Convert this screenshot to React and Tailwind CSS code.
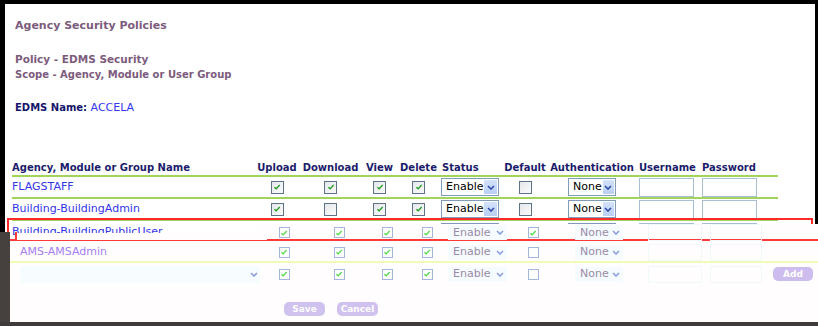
import React from "react";

const cols = "grid grid-cols-[243px_44px_63px_35px_43px_62px_46px_88px_63px_61px]";
const ocols = "grid grid-cols-[252px_44px_66px_30px_50px_58px_46px_84px_65px_60px_53px]";

function Chevron({ color = "#2f4aa8" }) {
  return (
    <svg viewBox="0 0 8 5" className="w-[8px] h-[5px]">
      <path d="M1 1 L4 4 L7 1" stroke={color} strokeWidth="1.6" fill="none" />
    </svg>
  );
}

function Check({ color }) {
  return (
    <svg viewBox="0 0 10 10" className="w-[8px] h-[8px]">
      <path d="M1.8 5.2 L4 7.3 L8.3 2.6" stroke={color} strokeWidth="1.7" fill="none" />
    </svg>
  );
}

function Box({ checked }) {
  return (
    <span className="inline-flex w-[13px] h-[13px] items-center justify-center border border-[#5f7286] bg-gradient-to-br from-[#e4e7eb] to-[#fbfbfb]">
      {checked && <Check color="#1f9a1f" />}
    </span>
  );
}

function FaintBox({ checked }) {
  return (
    <span className="inline-flex w-[11px] h-[11px] items-center justify-center border border-[#a3b7dc] bg-white">
      {checked && <Check color="#59d84f" />}
    </span>
  );
}

function Select({ value, width }) {
  return (
    <div className={`flex h-[18px] items-stretch border border-[#7f9db9] bg-white ${width}`}>
      <span className="flex-1 pl-[4px] leading-[16px] text-[11px] text-black">{value}</span>
      <span className="w-[16px] m-[1px] flex items-center justify-center bg-gradient-to-b from-[#d4e2fa] to-[#b9cff4]">
        <Chevron />
      </span>
    </div>
  );
}

function FaintSelect({ value, className }) {
  return (
    <div className={`flex h-[15px] items-center bg-[#f5fbff] ${className}`}>
      <span className="flex-1 pl-[5px] text-[11px] leading-[14px] text-[#9a8aa4]">{value}</span>
      <span className="w-[14px] flex items-center justify-center">
        <Chevron color="#8c9edb" />
      </span>
    </div>
  );
}

function Input() {
  return <div className="ml-[3px] w-[55px] h-[19px] border border-[#a9c0d4] bg-white" />;
}

function Row({ name, d, last }) {
  return (
    <div className={`${cols} h-[22px] items-center ${last ? "" : "border-b-2 border-[#a2d45c]"}`}>
      <div className="text-[11px] text-[#3434e6] whitespace-nowrap">{name}</div>
      <div className="flex justify-center"><Box checked /></div>
      <div className="flex justify-center"><Box checked={d} /></div>
      <div className="flex justify-center"><Box checked /></div>
      <div className="flex justify-center"><Box checked /></div>
      <div className="pl-[1px]"><Select value={last ? "" : "Enable"} width="w-[58px]" /></div>
      <div className="flex justify-center"><Box /></div>
      <div className="flex justify-center"><Select value={last ? "" : "None"} width="w-[48px]" /></div>
      <Input />
      <Input />
    </div>
  );
}

function OverlayRow({ name, def, select, add, className }) {
  return (
    <div className={`${ocols} items-center ${className}`}>
      <div className="pl-[10px] text-[11px] text-[#a47ff0] whitespace-nowrap">
        {select ? (
          <div className="flex h-[17px] w-[240px] items-center justify-end bg-[#f7fcff] pr-[2px]">
            <Chevron color="#8c9edb" />
          </div>
        ) : (
          name
        )}
      </div>
      <div className="flex justify-center"><FaintBox checked /></div>
      <div className="flex justify-center"><FaintBox checked /></div>
      <div className="flex justify-center"><FaintBox checked /></div>
      <div className="flex justify-center"><FaintBox checked /></div>
      <div><FaintSelect value="Enable" className="-ml-[4px] w-[59px]" /></div>
      <div className="flex justify-center"><FaintBox checked={def} /></div>
      <div><FaintSelect value="None" className="ml-[19px] w-[48px]" /></div>
      <div><div className="ml-[8px] w-[54px] h-[17px] border border-[#f0f8fc]" /></div>
      <div><div className="ml-[5px] w-[52px] h-[17px] border border-[#f0f8fc]" /></div>
      <div>
        {add && (
          <div className="ml-[8px] w-[40px] h-[14px] rounded-[5px] bg-[#cdbdee] text-white text-[9px] font-bold leading-[14px] text-center">
            Add
          </div>
        )}
      </div>
    </div>
  );
}

export default function App() {
  return (
    <div
      className="relative w-[818px] h-[326px] overflow-hidden bg-black pt-[4px] pl-[5px] pr-[3px]"
      style={{ fontFamily: '"DejaVu Sans", Verdana, sans-serif' }}
    >
      <div className="h-full bg-white pt-[15px] pl-[7px]">
        <div className="pl-[3px] text-[11px] font-bold leading-[14px] text-[#7d5b7d]">Agency Security Policies</div>
        <div className="pl-[3px] mt-[18px] font-bold leading-[16px] text-[#7d5b7d]">
          <div className="text-[10.5px]">Policy - EDMS Security</div>
          <div className="text-[10px]">Scope - Agency, Module or User Group</div>
        </div>
        <div className="pl-[3px] mt-[17px] text-[10px] leading-[16px]">
          <span className="font-bold text-[#16166c]">EDMS Name: </span>
          <span className="text-[11px] text-[#3434f2]">ACCELA</span>
        </div>

        <div className="mt-[44px] w-[766px]">
          <div className={`${cols} h-[17px] pt-[1px] border-b-2 border-[#a2d45c] text-[10px] font-bold leading-[14px] text-[#1c1c6c]`}>
            <div>Agency, Module or Group Name</div>
            <div className="text-center">Upload</div>
            <div className="text-center">Download</div>
            <div className="text-center">View</div>
            <div className="text-center">Delete</div>
            <div className="pl-[2px]">Status</div>
            <div className="text-center">Default</div>
            <div className="text-center">Authentication</div>
            <div className="pl-[3px]">Username</div>
            <div className="pl-[3px]">Password</div>
          </div>
          <Row name="FLAGSTAFF" d />
          <Row name="Building-BuildingAdmin" />
          <Row name="Building-BuildingPublicUser" d last />
        </div>
      </div>

      {/* highlighted row outline */}
      <div className="absolute left-[7px] top-[218px] w-[806px] h-[16px] border-2 border-b-0 border-[#ff2a2a]" />

      {/* redraw layer lying over the table */}
      <div className="absolute left-[10px] right-0 top-[224px] bottom-[4px] flex flex-col">
        <OverlayRow
          def
          className="h-[17px] border-b-2 border-[#ff3a3a] bg-gradient-to-r from-transparent from-[31%] to-[#fffdfe] to-[31%]"
        />
        <OverlayRow name="AMS-AMSAdmin" className="h-[22px] pt-[2px] bg-[#fffdfe] border-b-2 border-[#f0fcb4]" />
        <OverlayRow select add className="h-[22px] bg-[#fffdfe]" />
        <div className="flex-1 bg-[#fffdfe] pt-[17px] pl-[274px] flex gap-[12px]">
          <div className="w-[41px] h-[14px] rounded-[5px] bg-[#d0c2ee] text-white text-[9px] font-bold leading-[14px] text-center">Save</div>
          <div className="w-[41px] h-[14px] rounded-[5px] bg-[#d0c2ee] text-white text-[9px] font-bold leading-[14px] text-center">Cancel</div>
        </div>
      </div>
      <div className="absolute left-[17px] top-[233px] w-[250px] h-[7px] bg-[#fffdfe]" />
      <div className="absolute left-[15px] top-[232px] w-[2px] h-[9px] bg-[#ff3a3a]" />

      <div className="absolute left-0 top-[232px] bottom-0 w-[10px] bg-[#46413f]" />
      <div className="absolute left-0 right-0 bottom-0 h-[4px] bg-[#3f3b3a]" />
    </div>
  );
}
